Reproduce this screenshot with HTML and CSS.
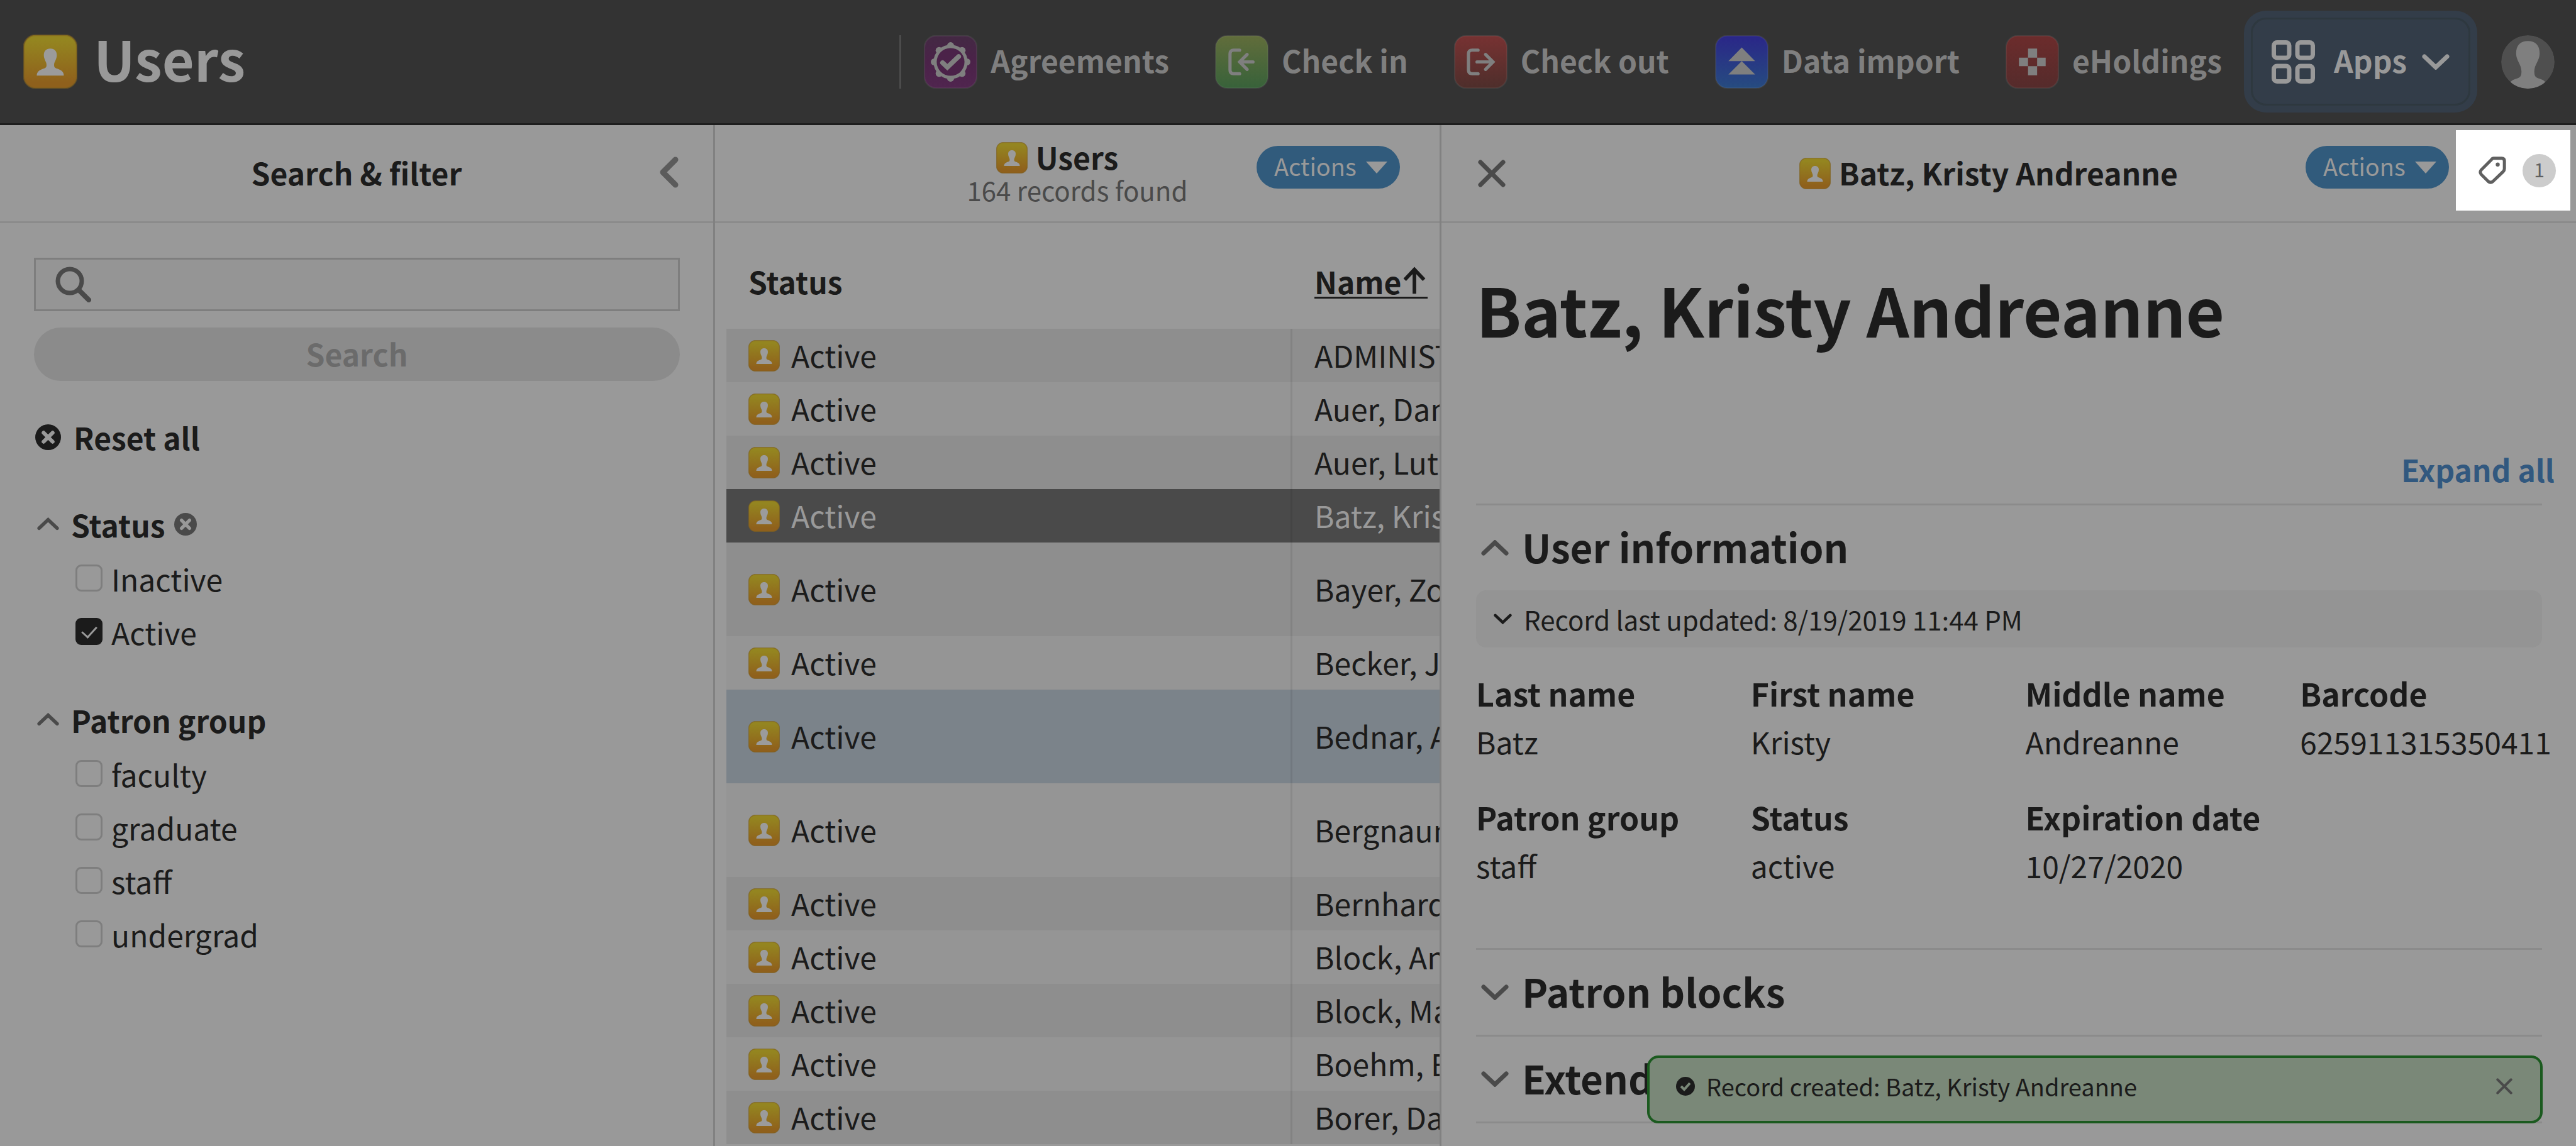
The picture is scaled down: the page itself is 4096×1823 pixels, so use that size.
FILE: index.html
```
<!DOCTYPE html>
<html lang="en">
<head>
<meta charset="utf-8">
<title>Users - Batz, Kristy Andreanne</title>
<link rel="stylesheet" href="styles.css">
</head>
<body>
<svg class="defs" aria-hidden="true">
  <defs>
    <linearGradient id="g-users" x1="0" y1="0" x2="0" y2="1"><stop offset="0.1" stop-color="#948520"/><stop offset="0.9" stop-color="#8f601c"/></linearGradient>
    <linearGradient id="g-agree" x1="0" y1="0" x2="0" y2="1"><stop offset="0" stop-color="#432943"/><stop offset="0.5" stop-color="#4b2249"/><stop offset="1" stop-color="#50254f"/></linearGradient>
    <linearGradient id="g-in" x1="0" y1="0" x2="0" y2="1"><stop offset="0" stop-color="#616d3b"/><stop offset="1" stop-color="#38623a"/></linearGradient>
    <linearGradient id="g-out" x1="0" y1="0" x2="0" y2="1"><stop offset="0" stop-color="#773232"/><stop offset="1" stop-color="#4e2e2b"/></linearGradient>
    <linearGradient id="g-import" x1="0" y1="0" x2="0" y2="1"><stop offset="0" stop-color="#2a2688"/><stop offset="1" stop-color="#264c80"/></linearGradient>
    <linearGradient id="g-ehold" x1="0" y1="0" x2="0" y2="1"><stop offset="0" stop-color="#6c2c2c"/><stop offset="1" stop-color="#552b2b"/></linearGradient>
    <path id="bust" d="M50 26C58 26 62 31 62 38C62 46 57 50 57 56C57 61 59 62 63 63C71 66 75 69 75 76H25C25 69 29 66 37 63C41 62 43 61 43 56C43 50 38 46 38 38C38 31 42 26 50 26Z"/>
    <symbol id="i-users" viewBox="0 0 100 100"><rect x="1" y="1" width="98" height="98" rx="22" fill="url(#g-users)" stroke="#7d5f20" stroke-opacity=".6" stroke-width="3"/><use href="#bust" fill="#9b9b9b"/></symbol>
    <symbol id="i-up" viewBox="0 0 44 25"><path d="M4 21L22 4L40 21" fill="none" stroke="currentColor" stroke-width="7" stroke-linecap="round"/></symbol>
    <symbol id="i-down" viewBox="0 0 44 25"><path d="M4 4L22 21L40 4" fill="none" stroke="currentColor" stroke-width="7" stroke-linecap="round"/></symbol>
    <symbol id="i-x" viewBox="0 0 44 44"><path d="M4 4L40 40M40 4L4 40" fill="none" stroke="currentColor" stroke-width="7" stroke-linecap="round"/></symbol>
    <symbol id="i-clear" viewBox="0 0 40 40"><circle cx="20" cy="20" r="20" fill="currentColor"/><path d="M13 13L27 27M27 13L13 27" stroke="#999" stroke-width="6" stroke-linecap="round"/></symbol>
    <symbol id="i-caret" viewBox="0 0 34 19"><path d="M0 0H34L17 19Z" fill="currentColor"/></symbol>
  </defs>
</svg>

<header class="top">
  <a class="brand" href="#users"><svg class="brand-icon"><use href="#i-users"/></svg><span class="brand-name">Users</span></a>
  <nav class="apps">
    <a class="app" href="#agreements">
      <svg class="app-icon" viewBox="0 0 100 100"><rect x="1" y="1" width="98" height="98" rx="22" fill="url(#g-agree)" stroke="#888" stroke-opacity=".15" stroke-width="3"/><g fill="#7f7f7f"><circle cx="50" cy="50" r="32"/><circle cx="50" cy="19.500" r="6.500"/><circle cx="71.500" cy="28.500" r="6.500"/><circle cx="80.500" cy="50" r="6.500"/><circle cx="71.500" cy="71.500" r="6.500"/><circle cx="50" cy="80.500" r="6.500"/><circle cx="28.500" cy="71.500" r="6.500"/><circle cx="19.500" cy="50" r="6.500"/><circle cx="28.500" cy="28.500" r="6.500"/></g><circle cx="50" cy="50" r="26" fill="#4b2249"/><path d="M35 51.500L44 60L65 40" fill="none" stroke="#7f7f7f" stroke-width="9" stroke-linecap="round"/></svg>
      <span class="app-name">Agreements</span></a>
    <a class="app" href="#checkin">
      <svg class="app-icon" viewBox="0 0 100 100"><rect x="1" y="1" width="98" height="98" rx="22" fill="url(#g-in)" stroke="#888" stroke-opacity=".15" stroke-width="3"/><g fill="none" stroke="#7f7f7f" stroke-width="6" stroke-linecap="round"><path d="M46 28H35Q28 28 28 35V65Q28 72 35 72H46"/><path d="M60 36L46 50L60 64M48 50H71"/></g></svg>
      <span class="app-name">Check in</span></a>
    <a class="app" href="#checkout">
      <svg class="app-icon" viewBox="0 0 100 100"><rect x="1" y="1" width="98" height="98" rx="22" fill="url(#g-out)" stroke="#888" stroke-opacity=".15" stroke-width="3"/><g fill="none" stroke="#7f7f7f" stroke-width="6" stroke-linecap="round"><path d="M45 28H34Q27 28 27 35V65Q27 72 34 72H45"/><path d="M59 36L73 50L59 64M43 50H71"/></g></svg>
      <span class="app-name">Check out</span></a>
    <a class="app" href="#data-import">
      <svg class="app-icon" viewBox="0 0 100 100"><rect x="1" y="1" width="98" height="98" rx="22" fill="url(#g-import)" stroke="#888" stroke-opacity=".15" stroke-width="3"/><path d="M50 23L75 48.500H25ZM50 48.500L75 73.500H25Z" fill="#7f7f7f"/></svg>
      <span class="app-name">Data import</span></a>
    <a class="app" href="#eholdings">
      <svg class="app-icon" viewBox="0 0 100 100"><rect x="1" y="1" width="98" height="98" rx="22" fill="url(#g-ehold)" stroke="#888" stroke-opacity=".15" stroke-width="3"/><path d="M42 25H59V42H42ZM42 58H59V75H42ZM25 42H42V58H25ZM59 42H75V58H59Z" fill="#7f7f7f"/></svg>
      <span class="app-name">eHoldings</span></a>
  </nav>
  <button class="apps-menu" type="button">
    <svg class="grid-icon" viewBox="0 0 69 69"><g fill="none" stroke="currentColor" stroke-width="7"><rect x="3.500" y="3.500" width="24.500" height="24.500" rx="5"/><rect x="41" y="3.500" width="24.500" height="24.500" rx="5"/><rect x="3.500" y="41" width="24.500" height="24.500" rx="5"/><rect x="41" y="41" width="24.500" height="24.500" rx="5"/></g></svg>
    <span class="app-name">Apps</span>
    <svg class="chevron"><use href="#i-down"/></svg>
  </button>
  <button class="profile" type="button" aria-label="My profile">
    <svg class="avatar" viewBox="0 0 100 100"><clipPath id="round"><circle cx="50" cy="50" r="50"/></clipPath><g clip-path="url(#round)"><circle cx="50" cy="50" r="50" fill="#4f4f4f"/><path d="M50 11C64 11 72 19 72 34C72 48 62 54 62 68C62 76 64 79 70 81C80 84 86 87 86 100H14C14 87 20 84 30 81C36 79 38 76 38 68C38 54 28 48 28 34C28 19 36 11 50 11Z" fill="#7f7f7f"/></g></svg>
  </button>
</header>

<main class="panes">
  <section class="pane" aria-label="Search and filter">
    <div class="pane-head">
      <h2 class="pane-title">Search &amp; filter</h2>
      <button class="collapse" type="button" aria-label="Hide filters"><svg class="collapse-icon" viewBox="0 0 31 50"><path d="M26 5L6 25L26 45" fill="none" stroke="currentColor" stroke-width="9" stroke-linecap="round" stroke-linejoin="round"/></svg></button>
    </div>
    <form class="filters">
      <label class="search-box">
        <svg class="search-icon" viewBox="0 0 57 57"><circle cx="23" cy="23" r="19" fill="none" stroke="currentColor" stroke-width="7"/><path d="M38 38L53 53" stroke="currentColor" stroke-width="8" stroke-linecap="round"/></svg>
        <input class="search-input" type="search" aria-label="Search users">
      </label>
      <button class="search-button" type="submit" disabled>Search</button>
      <button class="reset" type="button"><svg class="reset-icon"><use href="#i-clear"/></svg>Reset all</button>
      <fieldset class="group">
        <legend class="group-head"><button class="group-toggle" type="button"><svg class="group-chevron"><use href="#i-up"/></svg>Status</button><button class="group-clear" type="button" aria-label="Clear status"><svg class="clear-icon"><use href="#i-clear"/></svg></button></legend>
        <label class="option"><input class="tick" type="checkbox">Inactive</label>
        <label class="option"><input class="tick" type="checkbox" checked>Active</label>
      </fieldset>
      <fieldset class="group">
        <legend class="group-head"><button class="group-toggle" type="button"><svg class="group-chevron"><use href="#i-up"/></svg>Patron group</button></legend>
        <label class="option"><input class="tick" type="checkbox">faculty</label>
        <label class="option"><input class="tick" type="checkbox">graduate</label>
        <label class="option"><input class="tick" type="checkbox">staff</label>
        <label class="option"><input class="tick" type="checkbox">undergrad</label>
      </fieldset>
    </form>
  </section>

  <section class="pane" aria-label="Users">
    <div class="pane-head">
      <div class="pane-titles">
        <h2 class="pane-title with-icon"><svg class="row-icon"><use href="#i-users"/></svg>Users</h2>
        <p class="pane-sub">164 records found</p>
      </div>
      <div class="pane-tools list-tools"><button class="actions" type="button">Actions<svg class="caret"><use href="#i-caret"/></svg></button></div>
    </div>
    <div class="list">
      <table class="users">
        <thead><tr><th class="col-status">Status</th><th class="col-name"><button class="sort" type="button">Name<svg class="sort-arrow" viewBox="0 0 42 48"><path d="M21 45V6M5 22L21 5L37 22" fill="none" stroke="currentColor" stroke-width="6"/></svg></button></th></tr></thead>
        <tbody>
          <tr><td><span class="status"><svg class="row-icon"><use href="#i-users"/></svg>Active</span></td><td>ADMINISTRATOR</td></tr>
          <tr><td><span class="status"><svg class="row-icon"><use href="#i-users"/></svg>Active</span></td><td>Auer, Dane</td></tr>
          <tr><td><span class="status"><svg class="row-icon"><use href="#i-users"/></svg>Active</span></td><td>Auer, Luther</td></tr>
          <tr class="selected"><td><span class="status"><svg class="row-icon"><use href="#i-users"/></svg>Active</span></td><td>Batz, Kristy</td></tr>
          <tr class="tall"><td><span class="status"><svg class="row-icon"><use href="#i-users"/></svg>Active</span></td><td>Bayer, Zoe</td></tr>
          <tr><td><span class="status"><svg class="row-icon"><use href="#i-users"/></svg>Active</span></td><td>Becker, Jon</td></tr>
          <tr class="tall hovered"><td><span class="status"><svg class="row-icon"><use href="#i-users"/></svg>Active</span></td><td>Bednar, Ava</td></tr>
          <tr class="tall"><td><span class="status"><svg class="row-icon"><use href="#i-users"/></svg>Active</span></td><td>Bergnaum</td></tr>
          <tr><td><span class="status"><svg class="row-icon"><use href="#i-users"/></svg>Active</span></td><td>Bernhard</td></tr>
          <tr><td><span class="status"><svg class="row-icon"><use href="#i-users"/></svg>Active</span></td><td>Block, Ana</td></tr>
          <tr><td><span class="status"><svg class="row-icon"><use href="#i-users"/></svg>Active</span></td><td>Block, Max</td></tr>
          <tr><td><span class="status"><svg class="row-icon"><use href="#i-users"/></svg>Active</span></td><td>Boehm, Ed</td></tr>
          <tr><td><span class="status"><svg class="row-icon"><use href="#i-users"/></svg>Active</span></td><td>Borer, Dale</td></tr>
        </tbody>
      </table>
    </div>
  </section>

  <section class="pane" aria-label="User record">
    <div class="pane-head">
      <button class="close" type="button" aria-label="Close record"><svg class="close-icon"><use href="#i-x"/></svg></button>
      <h2 class="pane-title with-icon"><svg class="row-icon"><use href="#i-users"/></svg>Batz, Kristy Andreanne</h2>
      <div class="pane-tools record-tools">
        <button class="actions" type="button">Actions<svg class="caret"><use href="#i-caret"/></svg></button>
        <button class="tags" type="button" aria-label="Tags">
          <svg class="tag-icon" viewBox="0 0 62 62"><path d="M34 4H52Q58 4 58 10V27Q58 31 55 34L32 56Q27 60 22 56L6 40Q2 35 6 30L29 7Q31 4 34 4Z" fill="none" stroke="currentColor" stroke-width="7"/><circle cx="43" cy="18" r="4.500" fill="currentColor"/></svg>
          <span class="badge">1</span>
        </button>
      </div>
    </div>
    <div class="record">
      <h1 class="record-name">Batz, Kristy Andreanne</h1>
      <a class="expand" href="#all">Expand all</a>
      <section class="block">
        <h3 class="block-head"><button class="block-toggle" type="button"><svg class="chevron"><use href="#i-up"/></svg>User information</button></h3>
        <button class="meta" type="button"><svg class="meta-chevron"><use href="#i-down"/></svg>Record last updated: 8/19/2019 11:44 PM</button>
        <dl class="facts">
          <div><dt>Last name</dt><dd>Batz</dd></div>
          <div><dt>First name</dt><dd>Kristy</dd></div>
          <div><dt>Middle name</dt><dd>Andreanne</dd></div>
          <div><dt>Barcode</dt><dd>625911315350411</dd></div>
          <div><dt>Patron group</dt><dd>staff</dd></div>
          <div><dt>Status</dt><dd>active</dd></div>
          <div><dt>Expiration date</dt><dd>10/27/2020</dd></div>
        </dl>
      </section>
      <section class="block">
        <h3 class="block-head"><button class="block-toggle" type="button"><svg class="chevron"><use href="#i-down"/></svg>Patron blocks</button></h3>
      </section>
      <section class="block last">
        <h3 class="block-head"><button class="block-toggle" type="button"><svg class="chevron"><use href="#i-down"/></svg>Extended</button></h3>
      </section>
    </div>
    <div class="toast" role="status">
      <svg class="toast-icon" viewBox="0 0 30 30"><circle cx="15" cy="15" r="15" fill="#1b1b1b"/><path d="M8 15L13 20L22 10" fill="none" stroke="#7a8878" stroke-width="4"/></svg>
      <span class="toast-text">Record created: Batz, Kristy Andreanne</span>
      <button class="toast-close" type="button" aria-label="Dismiss"><svg class="toast-x"><use href="#i-x"/></svg></button>
    </div>
  </section>
</main>
</body>
</html>
```
FILE: styles.css
```
:root {
  --page: #999;
  --ink: #1b1b1b;
  --muted: #4a4a4a;
  --rule: #8b8b8b;
  --edge: #818181;
  --blue: #315b7c;
}

* { box-sizing: border-box; }

body {
  margin: 0;
  height: 100vh;
  display: flex;
  flex-direction: column;
  overflow: hidden;
  background: var(--page);
  color: var(--ink);
  font-family: "Noto Sans CJK SC", sans-serif;
  font-size: 48px;
  line-height: 70px;
}

h1, h2, h3, p, dl, dd, fieldset, legend { margin: 0; padding: 0; border: 0; }

button {
  margin: 0;
  padding: 0;
  border: 0;
  background: none;
  color: inherit;
  font: inherit;
}

a { color: inherit; text-decoration: none; }
svg { display: block; flex: none; }
.defs { position: absolute; width: 0; height: 0; }

/* Top bar */
.top {
  display: flex;
  align-items: center;
  height: 199px;
  padding: 0 34px 0 37px;
  flex: none;
  background: #333;
  border-bottom: 3px solid #1e1e1e;
  color: #7f7f7f;
  font-weight: 700;
}

.brand { display: flex; align-items: center; gap: 26px; color: #999; }
.brand-icon { width: 86px; height: 86px; }
.brand-name { font-size: 88px; line-height: 128px; padding-bottom: 12px; }

.apps { display: flex; align-items: center; gap: 73px; margin-left: auto; padding-left: 36px; border-left: 3px solid #4c4c4c; }
.app { display: flex; align-items: center; gap: 21px; }
.app-icon { width: 85px; height: 85px; }
.app-name { padding-bottom: 6px; }

.apps-menu {
  display: flex;
  align-items: center;
  width: 349px;
  height: 140px;
  margin-left: 46px;
  padding: 0 30px;
  border: 3px solid #2e383f;
  border-radius: 24px;
  background: #333d49;
  box-shadow: 0 0 0 11px #333d49;
  color: #999;
}
.grid-icon { width: 69px; height: 69px; margin-right: 30px; }
.chevron { width: 44px; height: 25px; }
.apps-menu .chevron { margin-left: auto; }

.profile { margin-left: 49px; }
.avatar { width: 85px; height: 85px; }

/* Panes */
.panes { flex: 1; min-height: 0; display: grid; grid-template-columns: 1137fr 1155fr 1804fr; }
.pane { position: relative; min-width: 0; overflow: hidden; border-right: 3px solid var(--edge); }
.pane:last-child { border-right: 0; }

.pane-head {
  position: relative;
  display: flex;
  align-items: center;
  justify-content: center;
  height: 156px;
  border-bottom: 3px solid var(--rule);
}
.pane-title { font-size: 48px; line-height: 56px; font-weight: 700; }
.pane-head > .pane-title { padding-bottom: 4px; }
.with-icon { display: flex; align-items: center; gap: 13px; padding-right: 64px; }
.row-icon { width: 50px; height: 50px; margin-top: 4px; }
.pane-titles { display: flex; flex-direction: column; align-items: center; padding-bottom: 4px; }
.pane-sub { font-size: 42px; line-height: 50px; color: var(--muted); }

.collapse { position: absolute; top: 50px; right: 55px; color: #5b5b5b; }
.collapse-icon { width: 31px; height: 50px; }
.close { position: absolute; left: 58px; color: var(--muted); }
.close-icon { width: 44px; height: 44px; }

.pane-tools { position: absolute; top: 0; display: flex; align-items: flex-start; gap: 11px; }
.list-tools { right: 63px; }
.record-tools { right: 9px; }

.actions {
  display: flex;
  align-items: center;
  justify-content: space-between;
  width: 228px;
  height: 68px;
  margin-top: 33px;
  padding: 0 20px 4px 28px;
  border-radius: 34px;
  background: var(--blue);
  color: #999;
  font-size: 38px;
  line-height: 56px;
}
.caret { width: 34px; height: 19px; margin-top: 4px; }

.tags {
  display: flex;
  align-items: center;
  gap: 26px;
  height: 128px;
  margin-top: 8px;
  padding: 0 23px 0 36px;
  background: #fff;
  color: #606060;
}
.tag-icon { width: 44px; height: 44px; }
.badge { width: 53px; height: 53px; padding-bottom: 4px; border-radius: 50%; background: #ccc; font-size: 30px; line-height: 49px; text-align: center; }

/* Filters */
.filters { display: flex; flex-direction: column; padding: 55px 53px 0 54px; }
.search-box { display: flex; align-items: center; height: 85px; padding: 0 31px; border: 3px solid #7e7e7e; background: #959595; color: var(--muted); }
.search-icon { width: 57px; height: 57px; }
.search-input { flex: 1; min-width: 0; margin-left: 16px; border: 0; outline: 0; background: none; font: inherit; }
.search-button { height: 85px; margin-top: 26px; padding-bottom: 4px; border-radius: 43px; background: #8b8b8b; color: #6b6b6b; font-weight: 700; }
.reset { display: flex; align-items: center; gap: 20px; height: 86px; margin-top: 46px; padding-left: 2px; font-weight: 700; }
.reset-icon { width: 41px; height: 41px; }

.group { margin-top: 52px; min-width: 0; }
.group-head { display: flex; align-items: center; gap: 14px; height: 87px; font-weight: 700; }
.group-toggle { display: flex; align-items: center; gap: 19px; padding-left: 5px; }
.group-chevron { width: 35px; height: 21px; color: var(--muted); }
.group-clear { color: var(--muted); }
.clear-icon { width: 36px; height: 36px; }
.option { display: flex; align-items: center; gap: 14px; height: 85px; padding-left: 66px; }
.group .option:last-child { margin-bottom: 2px; }

.tick {
  appearance: none;
  display: flex;
  justify-content: center;
  align-items: center;
  width: 43px;
  height: 43px;
  margin: 0;
  border: 3px solid #7e7e7e;
  border-radius: 9px;
}
.tick:checked { border-color: var(--ink); background: var(--ink); }
.tick:checked::after {
  content: "";
  width: 11px;
  height: 20px;
  margin-bottom: 5px;
  border: solid #999;
  border-width: 0 3px 3px 0;
  transform: rotate(42deg);
}

/* User list */
.list { padding-left: 18px; }
.users { width: 1400px; table-layout: fixed; border-collapse: separate; border-spacing: 0; text-align: left; }
.col-status { width: 900px; }
.users th { height: 168px; padding: 16px 0 0 35px; }
.users td { height: 85px; padding: 0 0 4px 35px; white-space: nowrap; }
.users td:first-child { border-right: 3px solid rgba(0, 0, 0, 0.08); }
.users .tall td { height: 149px; }
.users tbody tr { background: #959595; }
.users tbody tr:nth-child(odd) { background: #8e8e8e; }
.users tbody .selected { background: #4a4a4a; color: #999; }
.users tbody tr.hovered { background: #7b838a; }
.status { display: flex; align-items: center; gap: 18px; }
.sort { display: inline-flex; align-items: center; height: 52px; border-bottom: 3px solid currentColor; font-weight: 700; line-height: 48px; }
.sort-arrow { width: 42px; height: 46px; }

/* Record */
.record { display: flex; flex-direction: column; padding: 62px 54px 0 55px; }
.record-name { font-size: 106px; line-height: 148px; font-weight: 700; }
.expand { align-self: flex-end; margin: 146px -20px 20px 0; color: #31587f; font-weight: 700; }

.block { border-top: 3px solid var(--rule); }
.block.last { border-bottom: 3px solid var(--rule); }
.block-head { font-size: 62px; font-weight: 700; }
.block-toggle { display: flex; align-items: center; gap: 21px; height: 135px; padding: 0 0 6px 8px; line-height: 90px; }
.block-toggle .chevron { margin-top: 6px; color: var(--muted); }

.meta { display: flex; align-items: center; gap: 19px; width: 100%; height: 91px; padding: 0 28px; border-radius: 16px; background: #949494; font-size: 42px; }
.meta-chevron { width: 29px; height: 17px; }

.facts { display: grid; grid-template-columns: repeat(4, 1fr); row-gap: 43px; margin: 34px -52px 93px 0; line-height: 77px; }
.facts dt { font-size: 50px; font-weight: 700; }

/* Notification */
.toast {
  position: absolute;
  right: 53px;
  bottom: 36px;
  left: 327px;
  display: flex;
  align-items: center;
  height: 108px;
  padding: 0 44px 10px 42px;
  border: 4px solid #1b5a1f;
  border-radius: 18px;
  background: #7a8878;
  font-size: 38px;
  line-height: 56px;
}
.toast-icon { width: 30px; height: 30px; }
.toast-text { margin-left: 18px; }
.toast-close { margin-left: auto; color: var(--muted); }
.toast-x { width: 26px; height: 26px; }
```
